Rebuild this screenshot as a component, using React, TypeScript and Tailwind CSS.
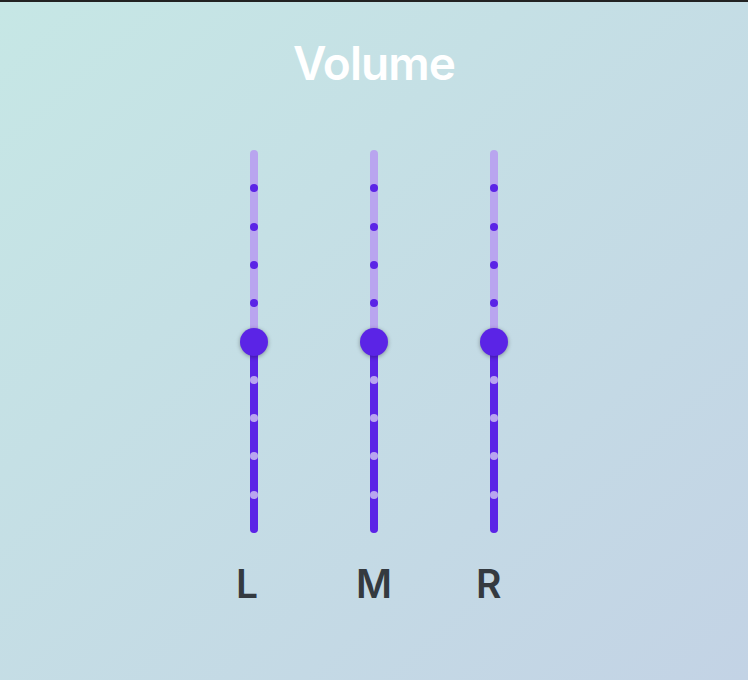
import React from 'react';

const channels = [
  { label: 'L', value: 50 },
  { label: 'M', value: 50 },
  { label: 'R', value: 50 },
];

const marks = [10, 20, 30, 40, 60, 70, 80, 90];

function Fader({ value }: { value: number }) {
  return (
    <div className="relative h-[383px] w-2 rounded-full bg-[#b9a5ef] overflow-visible">
      {/* filled part */}
      <div
        className="absolute bottom-0 left-0 w-2 rounded-full bg-[#5b24e6]"
        style={{ height: `${value}%` }}
      />
      {marks.map((m) => (
        <div
          key={m}
          className={`absolute left-0 w-2 h-2 -translate-y-1/2 rounded-full ${
            100 - m > value ? 'bg-[#5b24e6]' : 'bg-[#b9a5ef]'
          }`}
          style={{ top: `${m}%` }}
        />
      ))}
      {/* thumb */}
      <div
        className="absolute left-1/2 w-7 h-7 -translate-x-1/2 -translate-y-1/2 rounded-full bg-[#5b24e6] shadow-[0_1px_4px_rgba(0,0,0,0.35)]"
        style={{ top: `${100 - value}%` }}
      />
    </div>
  );
}

export default function App() {
  return (
    <div
      className="w-[748px] h-[680px] border-t-2 border-[#222222] bg-linear-to-br from-[#c6e7e5] to-[#c3d3e5] flex flex-col items-center"
      style={{ fontFamily: 'Inter, "Noto Sans", sans-serif' }}
    >
      <h1 className="pt-[38px] text-[46px] leading-none font-semibold tracking-[-0.02em] text-white">
        Volume
      </h1>

      <div className="mt-[64px] flex gap-20">
        {channels.map((c) => (
          <div key={c.label} className="w-10 flex flex-col">
            <div className="flex justify-center">
              <Fader value={c.value} />
            </div>
            <div className="mt-[31px] pl-[2px] text-[39px] leading-none font-semibold text-[#343a40]">
              {c.label}
            </div>
          </div>
        ))}
      </div>
    </div>
  );
}
